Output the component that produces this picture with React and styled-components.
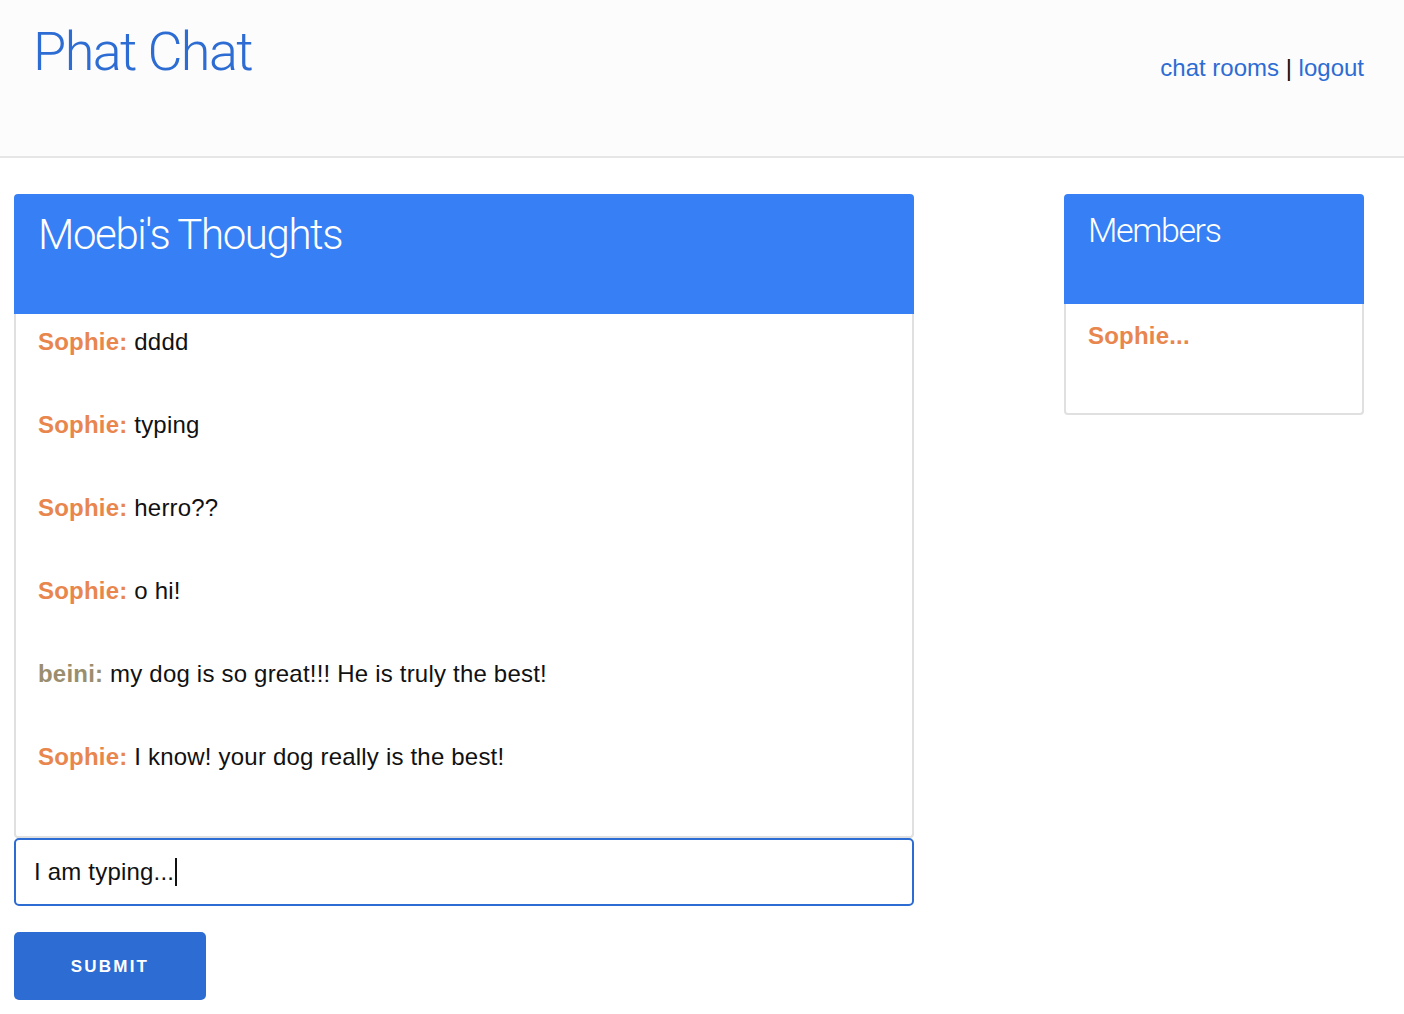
import React from "react";
import styled, { createGlobalStyle } from "styled-components";

const GlobalStyle = createGlobalStyle`
  body {
    margin: 0;
    background: #fff;
    font-family: "Liberation Sans", Arial, sans-serif;
  }
`;

const Header = styled.header`
  background: #fcfcfc;
  border-bottom: 2px solid #e6e6e6;
  height: 158px;
  box-sizing: border-box;
  display: flex;
  justify-content: space-between;
  align-items: flex-start;
  padding: 0 40px 0 33px;
  h1 {
    margin: 20px 0 0;
    font-family: Roboto, "Liberation Sans", sans-serif;
    font-weight: 300;
    font-size: 54px;
    letter-spacing: -1.6px;
    color: #2d6cd3;
  }
`;

const Nav = styled.nav`
  margin-top: 54px;
  font-size: 24px;
  color: #111;
  a {
    color: #2d6cd3;
    text-decoration: none;
    cursor: pointer;
  }
`;

const Main = styled.main`
  display: flex;
  justify-content: space-between;
  align-items: flex-start;
  padding: 36px 40px 0 14px;
`;

const Column = styled.div`
  width: ${(p) => p.width}px;
`;

const PanelHead = styled.div`
  background: #367ff5;
  height: ${(p) => p.height}px;
  border-radius: 4px 4px 0 0;
  box-sizing: border-box;
  padding: 16px 24px 0;
  h2 {
    margin: 0;
    font-family: Roboto, "Liberation Sans", sans-serif;
    font-weight: 300;
    font-size: ${(p) => p.size}px;
    letter-spacing: -1.4px;
    color: #fff;
  }
`;

const PanelBody = styled.div`
  border: 2px solid #e0e0e0;
  border-top: none;
  border-radius: 0 0 4px 4px;
  min-height: ${(p) => p.minHeight}px;
  box-sizing: border-box;
  padding: ${(p) => p.pad};
`;

const Message = styled.p`
  margin: 0 0 55px;
  font-size: 24px;
  line-height: 28px;
  letter-spacing: 0.2px;
  color: #111;
  &:last-child {
    margin-bottom: 0;
  }
`;

const Name = styled.b`
  color: ${(p) => (p.alt ? "#9a8e6e" : "#e8864d")};
`;

const Input = styled.div`
  height: 68px;
  box-sizing: border-box;
  border: 2px solid #2d6cd3;
  border-radius: 5px;
  display: flex;
  align-items: center;
  padding: 0 18px;
  font-size: 24px;
  letter-spacing: 0.2px;
  color: #111;
  span.caret {
    display: inline-block;
    width: 2px;
    height: 28px;
    background: #111;
    margin-left: 1px;
  }
`;

const Button = styled.button`
  margin-top: 26px;
  width: 192px;
  height: 68px;
  border: none;
  border-radius: 5px;
  background: #2d6cd3;
  color: #fff;
  font-family: "Liberation Sans", Arial, sans-serif;
  font-weight: bold;
  font-size: 17px;
  letter-spacing: 2.2px;
  padding-top: 2px;
  cursor: pointer;
`;

const messages = [
  { name: "Sophie", text: "dddd" },
  { name: "Sophie", text: "typing" },
  { name: "Sophie", text: "herro??" },
  { name: "Sophie", text: "o hi!" },
  { name: "beini", text: "my dog is so great!!! He is truly the best!", alt: true },
  { name: "Sophie", text: "I know! your dog really is the best!" },
];

export default function App() {
  return (
    <>
      <GlobalStyle />
      <Header>
        <h1>Phat Chat</h1>
        <Nav>
          <a>chat rooms</a> | <a>logout</a>
        </Nav>
      </Header>
      <Main>
        <Column width={900}>
          <PanelHead height={120} size={42}>
            <h2>Moebi's Thoughts</h2>
          </PanelHead>
          <PanelBody minHeight={524} pad="14px 22px 0">
            {messages.map((m, i) => (
              <Message key={i}>
                <Name alt={m.alt}>{m.name}:</Name> {m.text}
              </Message>
            ))}
          </PanelBody>
          <Input>
            I am typing...<span className="caret" />
          </Input>
          <Button>SUBMIT</Button>
        </Column>
        <Column width={300}>
          <PanelHead height={110} size={34}>
            <h2>Members</h2>
          </PanelHead>
          <PanelBody minHeight={111} pad="18px 22px 0">
            <Message>
              <Name>Sophie...</Name>
            </Message>
          </PanelBody>
        </Column>
      </Main>
    </>
  );
}
